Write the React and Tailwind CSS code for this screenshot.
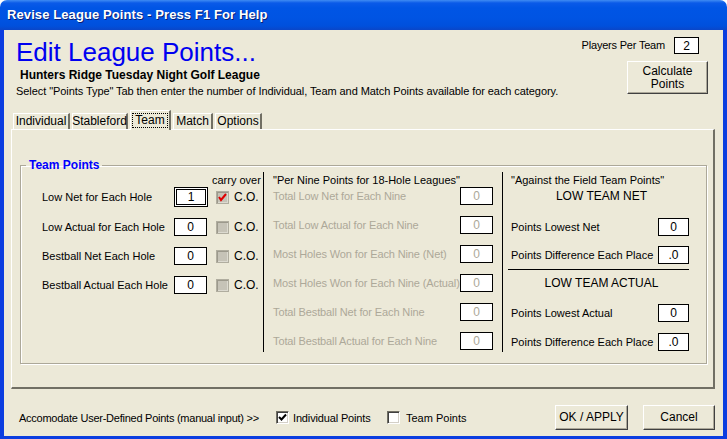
import React from "react";

const FONT = "font-['Liberation_Sans',Arial,sans-serif]";

function TextBox({ value, gray, focus, w = "w-[33px]" }) {
  return (
    <div
      className={`${w} ${focus ? "h-[20px] shadow-[inset_0_0_0_1px_#000,inset_0_0_0_2px_#fff,inset_0_0_0_3px_#000]" : "h-[18px] border border-black"} bg-white flex items-center justify-center text-[12px] ${gray ? "text-[#aca899]" : "text-black"}`}
    >
      {value}
    </div>
  );
}

function DisabledCheck({ checked }) {
  return (
    <div className="w-[13px] h-[13px] bg-[#c6c3b7] border border-[#b0ad9f] shadow-[inset_1px_1px_0_#9c998c,inset_-1px_-1px_0_#dcdad0] flex items-center justify-center">
      {checked && (
        <svg width="11" height="11" viewBox="0 0 11 11">
          <path d="M2 5 L4 8 L9 2" stroke="#e00000" strokeWidth="2" fill="none" />
        </svg>
      )}
    </div>
  );
}

function WinCheck({ checked }) {
  return (
    <div className="w-[13px] h-[13px] bg-white border border-t-[#716f64] border-l-[#716f64] border-b-white border-r-white shadow-[inset_1px_1px_0_#404040,inset_-1px_-1px_0_#d4d0c8] flex items-center justify-center">
      {checked && (
        <svg width="9" height="9" viewBox="0 0 9 9">
          <path d="M1 4 L3.5 6.5 L8 1.5" stroke="#000" strokeWidth="2" fill="none" />
        </svg>
      )}
    </div>
  );
}

function Button({ children, className = "" }) {
  return (
    <div
      className={`bg-[#ece9d8] border border-t-white border-l-white border-b-[#404040] border-r-[#404040] shadow-[inset_-1px_-1px_0_#aca899] flex flex-col items-center justify-center text-[12px] leading-[13px] text-black ${className}`}
    >
      {children}
    </div>
  );
}

function Tab({ label, selected, w }) {
  if (selected) {
    return (
      <div
        className={`${w} h-[20px] -mb-px relative z-10 bg-[#ece9d8] border-t border-l border-white border-r-2 border-r-[#716f64] flex items-start justify-center pt-[2px]`}
      >
        <span className="px-[2px] border border-dotted border-black leading-[13px]">{label}</span>
      </div>
    );
  }
  return (
    <div
      className={`${w} h-[16px] bg-[#ece9d8] border-t border-l border-white border-r-2 border-r-[#716f64] flex items-center justify-center`}
    >
      <span className="leading-[13px]">{label}</span>
    </div>
  );
}

export default function App() {
  return (
    <div className={`w-[727px] h-[439px] flex flex-col overflow-hidden ${FONT} text-[12px] text-black`}>
      {/* Title bar */}
      <div className="h-[30px] shrink-0 rounded-t-[7px] bg-[linear-gradient(to_bottom,#3f8cf3_0px,#0a5ae8_3px,#0055e5_8px,#0054e3_18px,#0050dc_26px,#0a46c8_30px)] flex items-center pl-[7px]">
        <span className="text-white font-bold text-[13px] tracking-[0.1px] [text-shadow:1px_1px_0_#0a1f73]">
          Revise League Points - Press F1 For Help
        </span>
      </div>

      {/* Window body with blue frame */}
      <div className="flex-1 flex flex-col bg-[#ece9d8] border-l-4 border-r-4 border-b-[3px] border-[#0b3de0]">
        {/* Header */}
        <div className="h-[80px] shrink-0 flex justify-between">
          <div className="pl-[12px] pt-[8px] flex flex-col">
            <div className="text-[26px] leading-[28px] text-[#0000f0]">Edit League Points...</div>
            <div className="mt-[2px] ml-[4px] text-[12px] leading-[14px] font-bold">
              Hunters Ridge Tuesday Night Golf League
            </div>
            <div className="mt-[2px] text-[11px] leading-[14px] tracking-[-0.07px]">
              Select "Points Type" Tab then enter the number of Individual, Team and Match Points available for each category.
            </div>
          </div>
          <div className="pr-[15px] pt-[7px] flex flex-col items-end">
            <div className="flex items-center mr-[9px]">
              <span className="text-[11px] tracking-[-0.2px]">Players Per Team</span>
              <div className="ml-[9px] w-[25px] h-[17px] border border-black bg-white flex items-center justify-center text-[12px]">
                2
              </div>
            </div>
            <Button className="mt-[7px] w-[81px] h-[33px]">
              <span>Calculate</span>
              <span>Points</span>
            </Button>
          </div>
        </div>

        {/* Tabs */}
        <div className="h-[19px] shrink-0 flex items-end pl-[9px] gap-[2px]">
          <Tab label="Individual" w="w-[57px]" />
          <Tab label="Stableford" w="w-[56px]" />
          <Tab label="Team" selected w="w-[41px]" />
          <Tab label="Match" w="w-[40px]" />
          <Tab label="Options" w="w-[47px]" />
        </div>

        {/* Tab panel */}
        <div className="ml-[7px] mr-[8px] h-[260px] shrink-0 border-t border-l border-white border-r-2 border-b-2 border-r-[#716f64] border-b-[#716f64] pt-[28px] pl-[8px] pr-[6px]">
          <fieldset className="h-[206px] border border-[#aca899] shadow-[1px_1px_0_#fff,inset_1px_1px_0_#fff] m-0 p-0 min-w-0">
            <legend className="ml-[5px] px-[3px] text-[12px] font-bold text-[#0000ff] leading-[14px]">
              Team Points
            </legend>
            <div className="flex text-[11px] -mt-[1px]">
              {/* Left column */}
              <div className="w-[242px] flex flex-col">
                <div className="h-[14px] mt-[2px] flex items-center pl-[191px] leading-[14px]">carry over</div>
                {[
                  ["Low Net for Each Hole", "1", true, true],
                  ["Low Actual for Each Hole", "0", false, false],
                  ["Bestball Net Each Hole", "0", false, false],
                  ["Bestball Actual Each Hole", "0", false, false],
                ].map(([label, v, focus, checked], i) => (
                  <div key={label} className={`flex items-center pl-[21px] ${i === 0 ? "h-[20px]" : "h-[18px] mt-[11px]"}`}>
                    <span className="w-[132px]">{label}</span>
                    <TextBox value={v} focus={focus} w={focus ? "w-[34px]" : "w-[33px]"} />
                    <div className={focus ? "ml-[8px]" : "ml-[9px]"}>
                      <DisabledCheck checked={checked} />
                    </div>
                    <span className="ml-[5px] text-[12px]">C.O.</span>
                  </div>
                ))}
              </div>
              {/* Divider */}
              <div className="w-px h-[180px] bg-black mt-[1px]" />
              {/* Middle column */}
              <div className="w-[238px] flex flex-col pl-[9px]">
                <div className="h-[14px] mt-[2px] flex items-center leading-[14px]">"Per Nine Points for 18-Hole Leagues"</div>
                {[
                  "Total Low Net for Each Nine",
                  "Total Low Actual for Each Nine",
                  "Most Holes Won for Each Nine (Net)",
                  "Most Holes Won for Each Nine (Actual)",
                  "Total Bestball Net for Each Nine",
                  "Total Bestball Actual for Each Nine",
                ].map((label, i) => (
                  <div key={label} className={`flex items-center h-[18px] ${i === 0 ? "" : "mt-[11px]"}`}>
                    <span className="w-[187px] text-[#aca899] whitespace-nowrap tracking-[-0.12px]">{label}</span>
                    <TextBox value="0" gray />
                  </div>
                ))}
              </div>
              {/* Divider */}
              <div className="w-px h-[180px] bg-black mt-[1px]" />
              {/* Right column */}
              <div className="flex-1 flex flex-col pl-[8px]">
                <div className="h-[14px] mt-[2px] flex items-center leading-[14px]">"Against the Field Team Points"</div>
                <div className="h-[18px] w-[181px] flex items-center justify-center text-[12px]">LOW TEAM NET</div>
                <div className="mt-[13px] h-[18px] flex items-center">
                  <span className="w-[147px]">Points Lowest Net</span>
                  <TextBox value="0" w="w-[31px]" />
                </div>
                <div className="mt-[10px] h-[18px] flex items-center">
                  <span className="w-[147px]">Points Difference Each Place</span>
                  <TextBox value=".0" w="w-[31px]" />
                </div>
                <div className="mt-[5px] ml-[-3px] w-[181px] h-px bg-black" />
                <div className="mt-[4px] h-[18px] w-[181px] flex items-center justify-center text-[12px]">LOW TEAM ACTUAL</div>
                <div className="mt-[12px] h-[18px] flex items-center">
                  <span className="w-[147px]">Points Lowest Actual</span>
                  <TextBox value="0" w="w-[31px]" />
                </div>
                <div className="mt-[11px] h-[18px] flex items-center">
                  <span className="w-[147px]">Points Difference Each Place</span>
                  <TextBox value=".0" w="w-[31px]" />
                </div>
              </div>
            </div>
          </fieldset>
        </div>

        {/* Bottom row */}
        <div className="flex-1 flex items-center pl-[15px] pr-[8px] pt-[9px]">
          <span className="w-[257px] text-[11px] pt-[3px] tracking-[-0.25px]">Accomodate User-Defined Points (manual input) &gt;&gt;</span>
          <WinCheck checked />
          <span className="ml-[4px] w-[94px] text-[11px] pt-[3px] tracking-[-0.15px]">Individual Points</span>
          <WinCheck />
          <span className="ml-[6px] text-[11px] pt-[3px]">Team Points</span>
          <div className="ml-auto flex gap-[15px]">
            <Button className="w-[73px] h-[25px]">OK / APPLY</Button>
            <Button className="w-[72px] h-[25px]">Cancel</Button>
          </div>
        </div>
      </div>
    </div>
  );
}
